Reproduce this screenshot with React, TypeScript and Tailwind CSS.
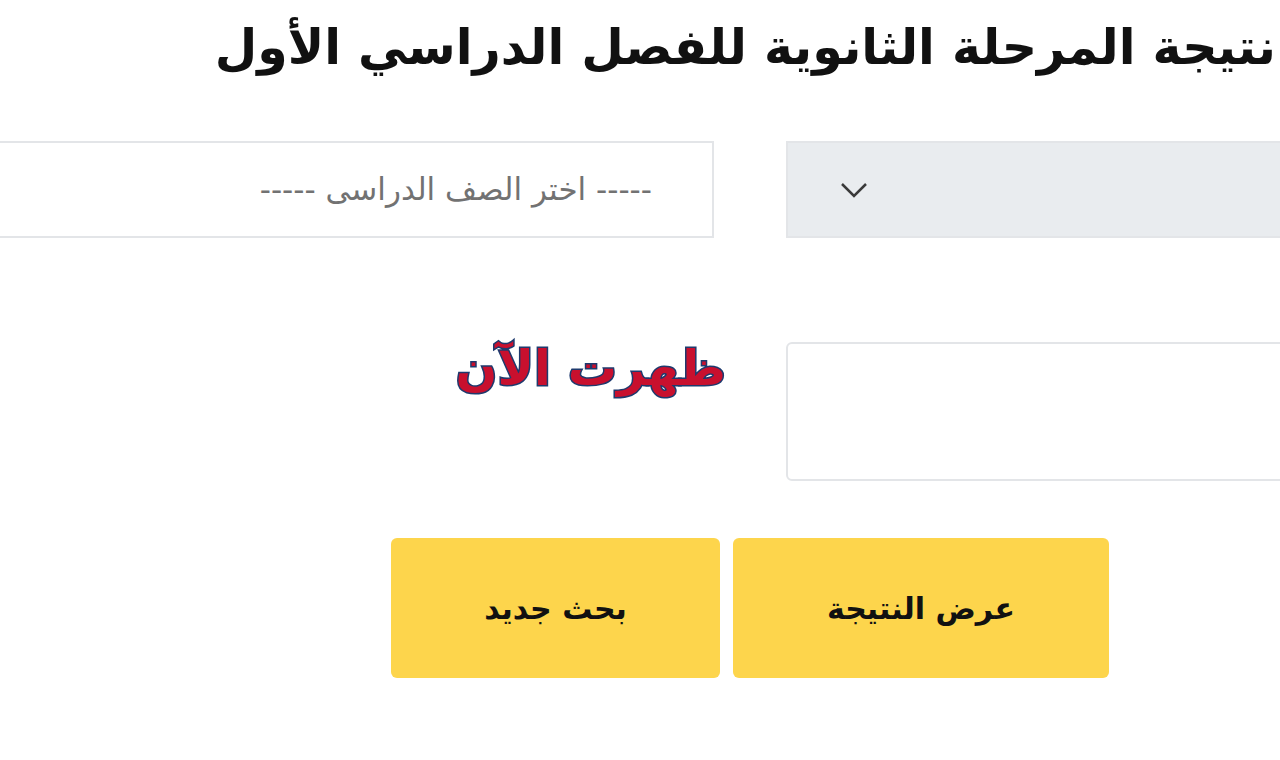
export default function App() {
  return (
    <div
      dir="rtl"
      className="h-[760px] w-[1280px] overflow-hidden bg-white font-['DejaVu_Sans',sans-serif]"
    >
      <div className="mr-[-266px] w-[1592px]">
        <h1 className="pr-[270px] pt-[12px] text-[49px] leading-[72px] font-bold whitespace-nowrap text-[#111]">
          نتيجة المرحلة الثانوية للفصل الدراسي الأول
        </h1>

        <div className="mt-[57px] grid grid-cols-2 gap-x-[72px]">
          <div className="h-[97px] border-2 border-[#e3e5e8] bg-[#e9ecef] flex items-center justify-end pl-[53px]">
            <svg width="26" height="16" viewBox="0 0 26 16" fill="none">
              <path d="M1 2l12 12L25 2" stroke="#3a3a3a" strokeWidth="2.5" />
            </svg>
          </div>
          <div className="h-[97px] border-2 border-[#e3e5e8] bg-white flex items-center pr-[60px]">
            <span className="text-[31px] text-[#727272] whitespace-nowrap">
              ----- اختر الصف الدراسى -----
            </span>
          </div>
        </div>

        <div className="mt-[104px] grid grid-cols-2 gap-x-[72px]">
          <div className="h-[139px] rounded-md border-2 border-[#e3e5e8] bg-white" />
          <div className="mr-[-12px] -mt-[10px]">
            <span className="text-[49px] leading-[74px] font-bold text-[#c8102e] [-webkit-text-stroke:3px_#1e3a6e] [paint-order:stroke_fill]">
              ظهرت الآن
            </span>
          </div>
        </div>

        <div className="mt-[57px] flex justify-center gap-[13px]">
          <button className="h-[140px] w-[376px] rounded-md bg-[#fdd54c] text-[30px] font-bold text-[#111]">
            عرض النتيجة
          </button>
          <button className="h-[140px] w-[329px] rounded-md bg-[#fdd54c] text-[30px] font-bold text-[#111]">
            بحث جديد
          </button>
        </div>
      </div>
    </div>
  );
}
